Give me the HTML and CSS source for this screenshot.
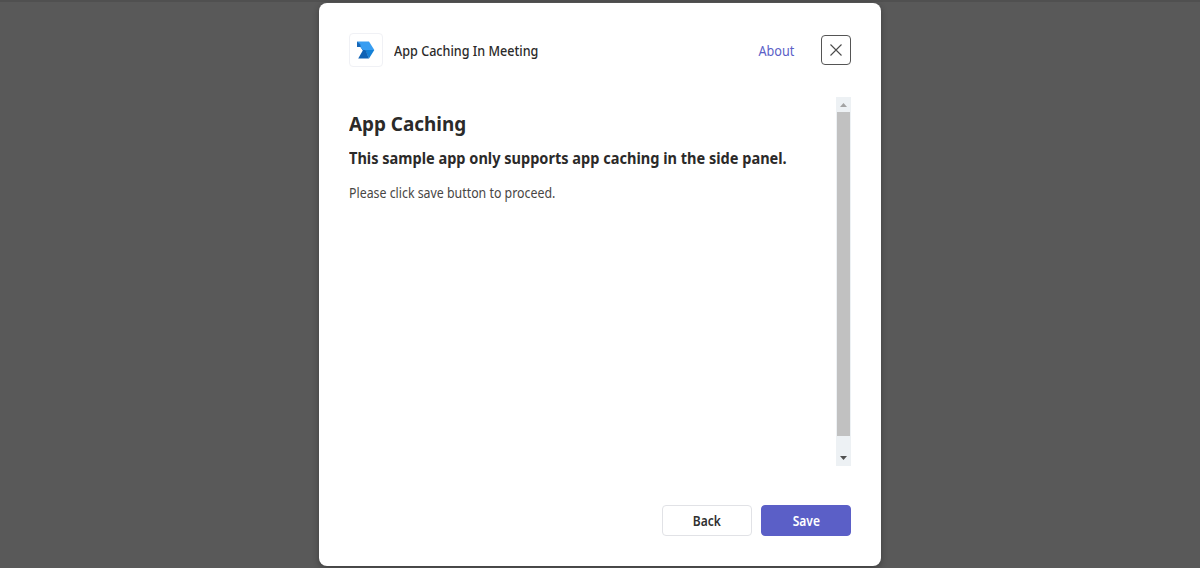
FILE: index.html
```html
<!DOCTYPE html>
<html lang="en">
<head>
<meta charset="utf-8">
<title>App Caching In Meeting</title>
<link rel="stylesheet" href="styles.css">
</head>
<body>
<main class="dialog">
  <header class="dialog-header">
    <div class="app-icon">
      <svg width="18" height="18" viewBox="0 0 18 18">
        <path d="M0 .4H12L17.3 9H6Z" fill="#379df1"/>
        <path d="M0 .4L6.5 6H0Z" fill="#1667b8"/>
        <path d="M8 9H17.3L12 17.6Z" fill="#1480d6"/>
        <path d="M8.5 9L12 17.6H1.2L5.8 9.4L3.5 6H6Z" fill="#0f62b4"/>
        <path d="M3.2 3.2H7L12 9H5.8L3.8 6.2Z" fill="#379df1"/>
      </svg>
    </div>
    <span class="app-name">App Caching In Meeting</span>
    <a class="about">About</a>
    <button class="close" aria-label="Close">
      <svg width="12" height="12" viewBox="0 0 12 12"><path d="M.5.5l11 11M11.5.5l-11 11" stroke="#4b4b4b" stroke-width="1.1"/></svg>
    </button>
  </header>
  <section class="content">
    <div class="copy">
      <h1>App Caching</h1>
      <h2>This sample app only supports app caching in the side panel.</h2>
      <p>Please click save button to proceed.</p>
    </div>
    <div class="scrollbar">
      <svg class="arrow" width="15" height="15" viewBox="0 0 15 15"><path d="M4 10L7.5 6L11 10Z" fill="#a3a3a3"/></svg>
      <div class="thumb"></div>
      <svg class="arrow" width="15" height="15" viewBox="0 0 15 15"><path d="M4 5L7.5 9L11 5Z" fill="#505050"/></svg>
    </div>
  </section>
  <footer class="actions">
    <button class="btn"><span class="label">Back</span></button>
    <button class="btn primary"><span class="label">Save</span></button>
  </footer>
</main>
</body>
</html>
```
FILE: styles.css
```css
* { box-sizing: border-box; }
body {
  margin: 0;
  height: 568px;
  overflow: hidden;
  padding-top: 3px;
  background: linear-gradient(#505050 0 2px, #595959 2px);
  font-family: "Noto Sans", "Open Sans", sans-serif;
  color: #2b2a29;
}
.dialog {
  width: 562px;
  height: 563px;
  margin: 0 auto;
  padding: 30px;
  background: #fff;
  border-radius: 8px;
  box-shadow: 0 2px 6px rgba(0, 0, 0, .3);
  display: flex;
  flex-direction: column;
}
.dialog-header { display: flex; align-items: center; height: 34px; }
.app-icon {
  width: 34px;
  height: 34px;
  border: 1px solid #f0f1f5;
  border-radius: 4px;
  display: flex;
  align-items: center;
  justify-content: center;
}
.app-name {
  margin-left: 11px;
  padding-top: 1px;
  font-size: 13.5px;
  font-weight: 500;
  white-space: nowrap;
  transform: scaleX(.933);
  transform-origin: left;
}
.about {
  margin-left: auto;
  margin-right: 27px;
  padding-top: 1px;
  font-size: 13.5px;
  color: #5b5fc7;
  transform: scaleX(.937);
  transform-origin: right;
}
.close {
  width: 30px;
  height: 30px;
  padding: 0;
  background: #fff;
  border: 1px solid #555;
  border-radius: 4px;
  display: flex;
  align-items: center;
  justify-content: center;
}
.content { display: flex; justify-content: space-between; margin-top: 30px; height: 369px; }
.copy { width: 470px; padding-top: 13px; white-space: nowrap; }
h1, h2, p { margin: 0; transform-origin: left; }
h1 { font-size: 19.5px; line-height: 28px; font-weight: 700; transform: scaleX(.968); }
h2 { font-size: 15.5px; line-height: 22px; margin-top: 9px; font-weight: 700; transform: scaleX(.938); }
p { font-size: 13.5px; line-height: 20px; margin-top: 14px; color: #484644; transform: scaleX(.915); }
.scrollbar {
  width: 15px;
  background: #edf1f4;
  display: flex;
  flex-direction: column;
}
.arrow { flex: none; }
.thumb { height: 324px; margin: 0 1px 15px; background: #c1c1c1; }
.actions { display: flex; justify-content: flex-end; gap: 9px; margin-top: 39px; }
.btn {
  width: 90px;
  height: 31px;
  padding: 1px 0 0;
  border: 1px solid #e1e2e6;
  border-radius: 4px;
  background: #fff;
  color: #303030;
  font: 600 13.5px "Noto Sans", "Open Sans", sans-serif;
}
.label { display: inline-block; transform: scaleX(.89); }
.primary { background: #5b5fc7; border-color: #5b5fc7; color: #fff; }
```
